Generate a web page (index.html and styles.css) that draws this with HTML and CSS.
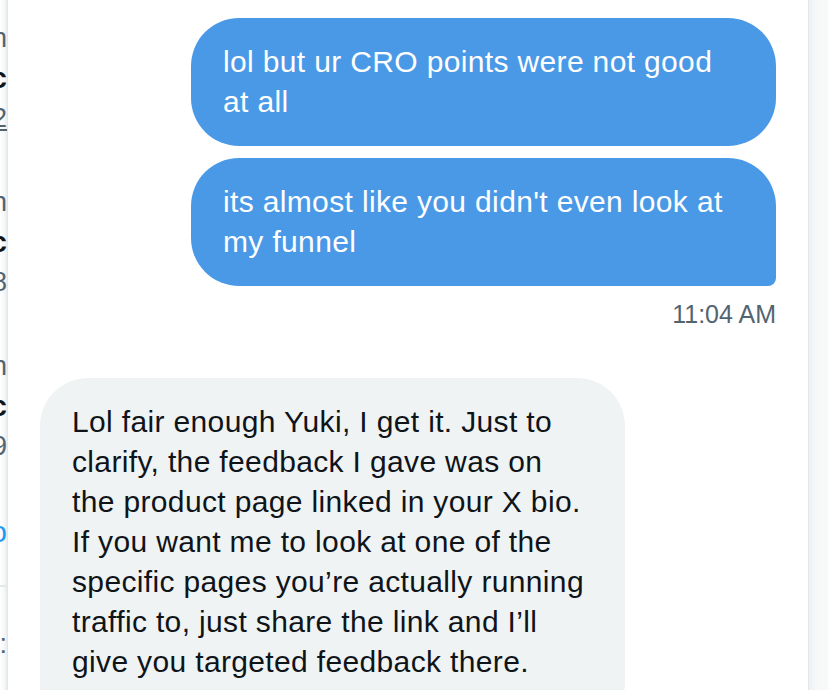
FILE: index.html
```html
<!DOCTYPE html>
<html lang="en">
<head>
<meta charset="utf-8">
<title>Messages</title>
<link rel="stylesheet" href="styles.css">
</head>
<body>
<div class="app">
  <aside class="sidebar">
    <div class="conv">
      <div class="line muted"><span>Yuki @yukih</span></div>
      <div class="line strong"><span>You: lol but ur CRO points were not good ıc</span></div>
      <div class="line muted under"><span>Dec 2</span></div>
    </div>
    <div class="conv">
      <div class="line muted"><span>Sam @samwn</span></div>
      <div class="line strong"><span>Thanks for the quick feedback on the spec</span></div>
      <div class="line muted"><span>Nov 28</span></div>
    </div>
    <div class="conv">
      <div class="line muted"><span>Alex @alexbn</span></div>
      <div class="line strong"><span>Sounds good, I will take a look at the doc</span></div>
      <div class="line muted"><span>Nov 19</span></div>
    </div>
    <div class="more">
      <div class="line link"><span>Show mo</span></div>
    </div>
    <div class="section">
      <div class="line muted"><span>Message requests: 3 new requests  n:</span></div>
    </div>
  </aside>

  <main class="chat">
    <div class="bubble out">lol but ur CRO points were not good at all</div>
    <div class="bubble out last">its almost like you didn't even look at my funnel</div>
    <div class="time">11:04 AM</div>
    <div class="bubble in">Lol fair enough Yuki, I get it. Just to clarify, the feedback I gave was on the product page linked in your X bio. If you want me to look at one of the specific pages you’re actually running traffic to, just share the link and I’ll give you targeted feedback there.</div>
  </main>

  <div class="edge"></div>
</div>
</body>
</html>
```

FILE: styles.css
```css
* { box-sizing: border-box; }

html, body {
  margin: 0;
  padding: 0;
  height: 690px;
  overflow: hidden;
  background: #ffffff;
}

body {
  font-family: "Liberation Sans", Arial, sans-serif;
  color: #0f1419;
}

.app {
  display: flex;
  height: 690px;
  overflow: hidden;
}

/* left conversation list, almost fully hidden */
.sidebar {
  width: 8px;
  flex: none;
  overflow: hidden;
  background: linear-gradient(to right, #ffffff 0%, #f7f8f9 55%, #e9ecee 100%);
  border-right: 1px solid #e3e6e8;
}

.conv {
  padding: 18px 0 26px;
}

.line {
  display: flex;
  justify-content: flex-end;
  height: 40px;
  align-items: center;
  white-space: nowrap;
}

.line span { flex: none; }

.muted {
  color: #536471;
  font-size: 27px;
}

.under span {
  text-decoration: underline;
  text-decoration-color: #536471;
}

.strong {
  font-weight: 700;
  font-size: 29px;
  color: #0f1419;
}

.more {
  padding: 20px 0 33px;
  border-bottom: 2px solid #e6e9ea;
}

.link {
  color: #1d9bf0;
  font-size: 29px;
}

.section {
  padding-top: 37px;
}

/* chat area */
.chat {
  flex: 1;
  min-width: 0;
  display: flex;
  flex-direction: column;
  padding: 18px 32px 0;
}

.bubble {
  flex: none;
  max-width: 585px;
  padding: 24px 36px 24px 32px;
  font-size: 30px;
  line-height: 40px;
  letter-spacing: 0.35px;
  border-radius: 48px;
}

.out {
  align-self: flex-end;
  background: #4a99e7;
  color: #ffffff;
}

.out + .out { margin-top: 12px; }

.out.last {
  border-bottom-right-radius: 8px;
}

.time {
  align-self: flex-end;
  margin-top: 12px;
  font-size: 25px;
  line-height: 32px;
  color: #536471;
}

.in {
  align-self: flex-start;
  margin-top: 48px;
  padding-bottom: 48px;
  background: #eff3f4;
  color: #0f1419;
  border-bottom-left-radius: 8px;
}

/* right scrollbar strip */
.edge {
  width: 20px;
  flex: none;
  border-left: 1px solid #e4e7ea;
  background: linear-gradient(to right, #eef0f2 0%, #f6f7f8 35%, #f8f9f9 100%);
}
```
